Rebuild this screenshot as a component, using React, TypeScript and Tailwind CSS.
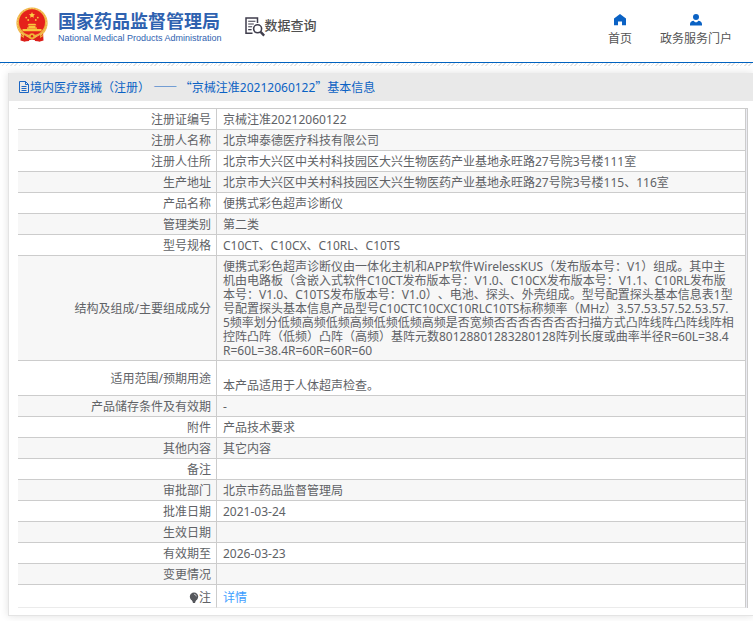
import React from 'react';

interface DetailRow {
  label: string;
  value: string;
  link?: boolean;
}

const STRUCTURE = [
  '便携式彩色超声诊断仪由一体化主机和APP软件WirelessKUS（发布版本号：V1）组成。其中主',
  '机由电路板（含嵌入式软件C10CT发布版本号：V1.0、C10CX发布版本号：V1.1、C10RL发布版',
  '本号：V1.0、C10TS发布版本号：V1.0）、电池、探头、外壳组成。型号配置探头基本信息表1型',
  '号配置探头基本信息产品型号C10CTC10CXC10RLC10TS标称频率（MHz）3.57.53.57.52.53.57.',
  '5频率划分低频高频低频高频低频低频高频是否宽频否否否否否否否扫描方式凸阵线阵凸阵线阵相',
  '控阵凸阵（低频）凸阵（高频）基阵元数80128801283280128阵列长度或曲率半径R=60L=38.4',
  'R=60L=38.4R=60R=60R=60',
].join('\n');

const ROWS: DetailRow[] = [
  { label: '注册证编号', value: '京械注准20212060122' },
  { label: '注册人名称', value: '北京坤泰德医疗科技有限公司' },
  { label: '注册人住所', value: '北京市大兴区中关村科技园区大兴生物医药产业基地永旺路27号院3号楼111室' },
  { label: '生产地址', value: '北京市大兴区中关村科技园区大兴生物医药产业基地永旺路27号院3号楼115、116室' },
  { label: '产品名称', value: '便携式彩色超声诊断仪' },
  { label: '管理类别', value: '第二类' },
  { label: '型号规格', value: 'C10CT、C10CX、C10RL、C10TS' },
  { label: '结构及组成/主要组成成分', value: STRUCTURE },
  { label: '适用范围/预期用途', value: '\n本产品适用于人体超声检查。' },
  { label: '产品储存条件及有效期', value: '-' },
  { label: '附件', value: '产品技术要求' },
  { label: '其他内容', value: '其它内容' },
  { label: '备注', value: '' },
  { label: '审批部门', value: '北京市药品监督管理局' },
  { label: '批准日期', value: '2021-03-24' },
  { label: '生效日期', value: '' },
  { label: '有效期至', value: '2026-03-23' },
  { label: '变更情况', value: '' },
  { label: '注', value: '详情', link: true },
];

const Emblem = () => (
  <svg viewBox="0 0 32 36" className="w-8 h-9 shrink-0" aria-hidden="true">
    <path d="M5 25L4.500 33.500L8 34.500L16 32.500L24 34.500L27.500 33.500L27 25z" fill="#dc1f1a" />
    <circle cx="16" cy="16" r="15.600" fill="#efb040" />
    <circle cx="16" cy="16" r="14.600" fill="none" stroke="#f8d57c" strokeWidth=".8" strokeDasharray="1.600 1.400" />
    <circle cx="16" cy="15.200" r="13" fill="#e5211b" />
    <path d="M16 5l.9 1.900 2.100.3-1.500 1.500.3 2.100-1.800-1-1.800 1 .3-2.100L13 7.200l2.100-.3z" fill="#fbcf45" />
    <g fill="#f9c63e">
      <circle cx="10.200" cy="10.600" r=".9" />
      <circle cx="12.200" cy="13" r=".9" />
      <circle cx="19.800" cy="13" r=".9" />
      <circle cx="21.800" cy="10.600" r=".9" />
      <path d="M11.500 18.200l1.200-1.400h6.600l1.200 1.400zM12.500 18.800h7v1.600h-7zM11 20.400h10v1.400H11zM6.500 22h19v2.200h-19z" />
    </g>
    <circle cx="16" cy="29.200" r="3" fill="#f2b434" />
    <circle cx="16" cy="29.200" r="1.200" fill="#dc1f1a" />
    <path d="M5 28.500l6 3.500M27 28.500l-6 3.500" fill="none" stroke="#f2b434" strokeWidth="1.200" />
    <path d="M8 28l5 3v3l-5 .5zM24 28l-5 3v3l5 .5z" fill="#dc1f1a" />
  </svg>
);

const SearchDocIcon = () => (
  <svg viewBox="0 0 20 20" className="w-5 h-5 shrink-0" fill="none" stroke="#3f3d4c" aria-hidden="true">
    <path d="M12.5 6V1H1v15.3h6.5" strokeWidth="1.5" />
    <path d="M3.2 4.2h7.2M3.2 7h5.6M3.2 9.8h4M3.2 12.6h3.4" strokeWidth="1.1" />
    <circle cx="12.6" cy="11.8" r="4" strokeWidth="1.6" />
    <path d="M15.6 14.8l3.6 3.8" strokeWidth="2.4" />
  </svg>
);

const HomeIcon = () => (
  <svg viewBox="0 0 12 12" className="w-3 h-3" fill="#0b62c4" aria-hidden="true">
    <path d="M6 0L12 4.500V11.200H8V7.500H4v3.700H0V4.500z" />
  </svg>
);

const UserIcon = () => (
  <svg viewBox="0 0 12 12" className="w-3 h-3" fill="#0b62c4" aria-hidden="true">
    <circle cx="6" cy="3" r="3" />
    <path d="M0 11.500V10C0 8 1.700 7 3.600 6.800L5.300 8.600L6 7.800L6.700 8.600L8.400 6.800C10.300 7 12 8 12 10V11.500z" />
  </svg>
);

const DocIcon = () => (
  <svg viewBox="0 0 12 12" className="w-3 h-3 shrink-0" fill="none" stroke="#1b66c4" strokeWidth="1" aria-hidden="true">
    <path d="M1.500 .5h6l3 3v8h-9zM7.500 .5v3h3M3.500 5.500h5M3.500 7.500h5M3.500 9.500h5" />
  </svg>
);

const BulbIcon = () => (
  <svg viewBox="0 0 10 12" className="w-[10px] h-3 shrink-0" aria-hidden="true">
    <circle cx="5" cy="4.800" r="4.200" fill="#55575c" />
    <path d="M3 8h4l-1 3H4z" fill="#55575c" />
    <path d="M5 2.200q2.100.1 2.300 2.200" fill="none" stroke="#d5d6d8" strokeWidth=".8" />
  </svg>
);

const Header = () => (
  <header>
    <div className="h-[62px] flex items-start justify-between pl-4 pr-[21px]">
      <div className="flex items-start">
        <a href="#" className="flex items-start gap-[10px] pt-[7px]">
          <Emblem />
          <span className="block pt-1 text-[#2f62b0] whitespace-nowrap">
            <span className="block text-[18px] leading-5 font-bold">国家药品监督管理局</span>
            <span className="block pt-px font-['Liberation_Sans',sans-serif] text-[9px] leading-3">
              National Medical Products Administration
            </span>
          </span>
        </a>
        <a href="#" className="flex items-start ml-[23px] pt-[17px] text-[13px] leading-4 font-medium text-[#505050]">
          <SearchDocIcon />
          数据查询
        </a>
      </div>
      <nav className="flex gap-7 pt-[14px] text-[#555] leading-4">
        <a href="#" className="flex flex-col items-center gap-[5px]">
          <HomeIcon />
          首页
        </a>
        <a href="#" className="flex flex-col items-center gap-[5px]">
          <UserIcon />
          政务服务门户
        </a>
      </nav>
    </div>
    <div className="h-px bg-[#0062c0]" />
    <div className="h-[3px] bg-[repeating-linear-gradient(135deg,#e4e4e4_0px,#e4e4e4_1px,#fff_1px,#fff_3px)]" />
  </header>
);

const DetailTable = () => (
  <div className="ml-[9px] mr-[5px] mt-[7px] pr-px bg-[#ebebf2] border-t border-r border-[#ccc]">
    <table className="w-full border-separate border-spacing-0">
      <tbody>
        {ROWS.map((row) => (
          <tr
            key={row.label}
            className="group bg-white even:bg-[#f7f7f7]"
          >
            <th
              scope="row"
              className="w-[199px] h-[21px] pt-1 pb-[2px] pr-[5px] text-right font-normal border-r border-b border-[#ccc] group-last:h-[23px] group-last:pt-[5px] group-last:border-b-[#ebebeb]"
            >
              <span className="inline-flex items-center align-top">
                {row.link && <BulbIcon />}
                {row.label}
              </span>
            </th>
            <td className="pt-1 pb-[2px] pl-[6px] whitespace-pre-line border-r border-b border-[#ccc] group-last:pt-[6px] group-last:border-b-[#ebebeb]">
              {row.link ? <a href="#" className="block text-[#409eff]">{row.value}</a> : row.value}
            </td>
          </tr>
        ))}
      </tbody>
    </table>
  </div>
);

export default function App() {
  return (
    <div
      lang="zh-CN"
      className="min-h-screen overflow-hidden bg-white font-['Noto_Sans','Noto_Sans_CJK_SC',sans-serif] text-[12px] leading-[14px] text-[#606266] [text-spacing-trim:space-all]"
    >
      <Header />
      <main className="mt-[7px] ml-2 pb-[7px] bg-white border-l border-b border-[#e4e4e4] shadow-[0_0_8px_rgba(0,0,0,0.12)]">
        <h1 className="flex items-center h-7 pl-[9px] bg-[#e9e9e9] text-[#0b62c4] whitespace-pre">
          <DocIcon />
          <span>
            境内医疗器械（注册） <span className="font-['Noto_Sans_CJK_SC',sans-serif]">—— “</span>
            京械注准20212060122
            <span className="font-['Noto_Sans_CJK_SC',sans-serif]">”</span>基本信息
          </span>
        </h1>
        <DetailTable />
      </main>
    </div>
  );
}
